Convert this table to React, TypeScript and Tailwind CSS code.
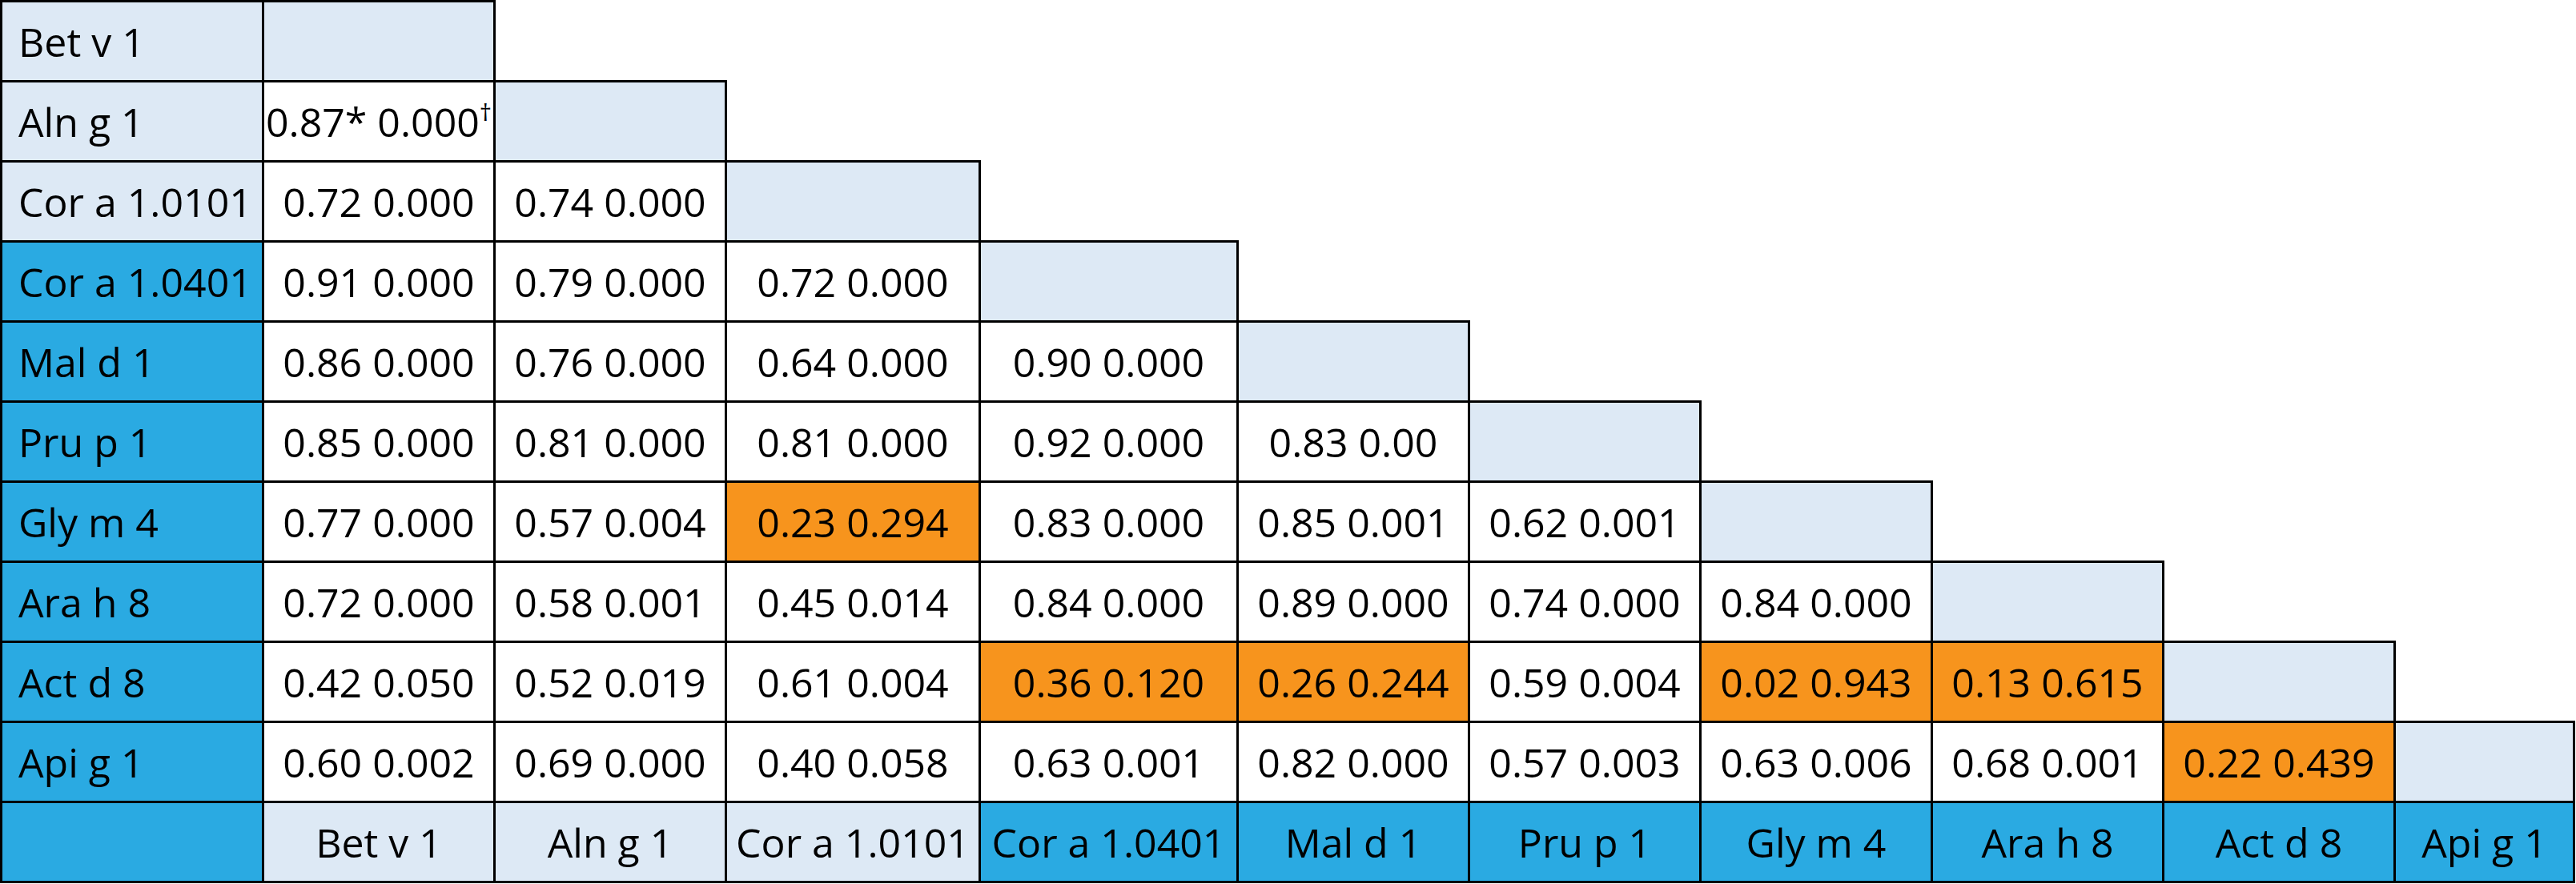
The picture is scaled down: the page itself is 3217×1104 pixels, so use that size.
const rowLabels = ["Bet v 1", "Aln g 1", "Cor a 1.0101", "Cor a 1.0401", "Mal d 1", "Pru p 1", "Gly m 4", "Ara h 8", "Act d 8", "Api g 1"];

// values below the diagonal, "!" marks an orange cell
const values: string[][] = [
  [],
  ["0.87*"],
  ["0.72 0.000", "0.74 0.000"],
  ["0.91 0.000", "0.79 0.000", "0.72 0.000"],
  ["0.86 0.000", "0.76 0.000", "0.64 0.000", "0.90 0.000"],
  ["0.85 0.000", "0.81 0.000", "0.81 0.000", "0.92 0.000", "0.83 0.00"],
  ["0.77 0.000", "0.57 0.004", "!0.23 0.294", "0.83 0.000", "0.85 0.001", "0.62 0.001"],
  ["0.72 0.000", "0.58 0.001", "0.45 0.014", "0.84 0.000", "0.89 0.000", "0.74 0.000", "0.84 0.000"],
  ["0.42 0.050", "0.52 0.019", "0.61 0.004", "!0.36 0.120", "!0.26 0.244", "0.59 0.004", "!0.02 0.943", "!0.13 0.615"],
  ["0.60 0.002", "0.69 0.000", "0.40 0.058", "0.63 0.001", "0.82 0.000", "0.57 0.003", "0.63 0.006", "0.68 0.001", "!0.22 0.439"],
];

const widths = [327, 289, 289, 317, 322, 289, 289, 289, 289, 289, 224];

function App() {
  return (
    <div className="bg-white min-h-screen" style={{ fontFamily: '"Open Sans", "Noto Sans", sans-serif' }}>
      <table className="table-fixed border-collapse text-[50px] leading-none text-black">
        <colgroup>
          {widths.map((w, i) => (
            <col key={i} style={{ width: w }} />
          ))}
        </colgroup>
        <tbody>
          {rowLabels.map((label, r) => (
            <tr key={label} className="h-[100px]">
              <td className={`border-[3px] border-black pl-[20px] text-left ${r < 3 ? "bg-[#dde9f5]" : "bg-[#2aaae2]"}`}>{label}</td>
              {r === 1 ? (
                <td className="border-[3px] border-black bg-white text-center">
                  0.87* 0.000<sup className="relative -top-[20px] align-baseline text-[30px]">†</sup>
                </td>
              ) : (
                values[r].map((v, c) => (
                  <td key={c} className={`border-[3px] border-black text-center ${v.startsWith("!") ? "bg-[#f7941d]" : "bg-white"}`}>
                    {v.replace("!", "")}
                  </td>
                ))
              )}
              <td className="border-[3px] border-black bg-[#dde9f5]"></td>
            </tr>
          ))}
          <tr className="h-[100px]">
            <td className="border-[3px] border-black bg-[#2aaae2]"></td>
            {rowLabels.map((label, c) => (
              <td key={label} className={`border-[3px] border-black text-center ${c < 3 ? "bg-[#dde9f5]" : "bg-[#2aaae2]"}`}>
                {label}
              </td>
            ))}
          </tr>
        </tbody>
      </table>
    </div>
  );
}

export default App;
